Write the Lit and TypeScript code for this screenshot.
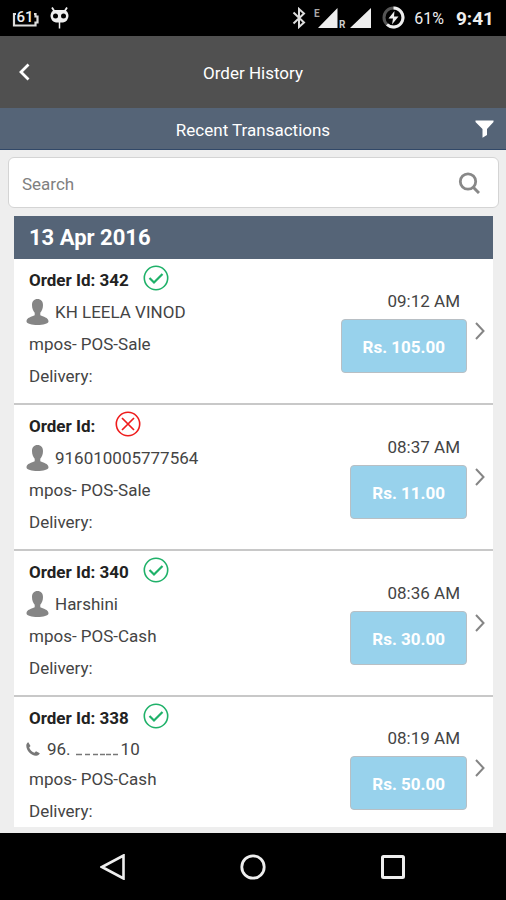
import { LitElement, html, css, svg, nothing } from "lit";
import { customElement, property } from "lit/decorators.js";

interface Order {
  id: string;
  ok: boolean;
  contact: "person" | "phone";
  name: string;
  nameEnd?: string;
  mode: string;
  time: string;
  amount: string;
}

const ORDERS: Order[] = [
  { id: "342", ok: true, contact: "person", name: "KH LEELA VINOD", mode: "POS-Sale", time: "09:12 AM", amount: "105.00" },
  { id: "", ok: false, contact: "person", name: "916010005777564", mode: "POS-Sale", time: "08:37 AM", amount: "11.00" },
  { id: "340", ok: true, contact: "person", name: "Harshini", mode: "POS-Cash", time: "08:36 AM", amount: "30.00" },
  { id: "338", ok: true, contact: "phone", name: "96.", nameEnd: "10", mode: "POS-Cash", time: "08:19 AM", amount: "50.00" },
];

@customElement("status-bar")
export class StatusBar extends LitElement {
  static styles = css`
    :host { display: flex; align-items: center; height: 36px; box-sizing: border-box; padding: 0 12px; background: #000; color: #eee; }
    svg { display: block; flex: none; }
    .left { display: flex; align-items: center; gap: 10px; flex: 1; }
    .right { display: flex; align-items: center; }
    .signals { margin: 0 11px 0 8px; }
    .pct { font-size: 16px; margin: 0 12px 0 9px; padding-top: 2px; }
    .clock { font-size: 19px; font-weight: 700; padding-top: 2px; }
    .tiny { font: 700 10px Roboto, sans-serif; }
    .num { font: 500 15px Roboto, sans-serif; }
  `;
  render() {
    return html`
      <div class="left">
        <svg width="28" height="22" viewBox="0 0 28 22" aria-label="Battery 61">
          <path d="M4 7H2V18.500H23.500V15.500H25.500V9.500H23.500V7H22" fill="none" stroke="#ddd" stroke-width="2.200" />
          <text class="num" x="4.500" y="14.500" fill="#eee">61</text>
        </svg>
        <svg width="19" height="22" viewBox="0 0 19 22" aria-label="System notification">
          <path d="M2 .5L4.500 4.500M17 .5L14.500 4.500" stroke="#eee" stroke-width="1.800" />
          <path d="M4 3H15Q18.500 5 18.500 9Q18 14.500 13 15.500H6Q1 14.500 .5 9Q.5 5 4 3Z" fill="#eee" />
          <circle cx="5.500" cy="9" r="2.500" fill="#000" /><circle cx="13.500" cy="9" r="2.500" fill="#000" />
          <path d="M9.500 15V21.500" stroke="#eee" stroke-width="1.500" />
        </svg>
      </div>
      <div class="right">
        <svg width="14" height="22" viewBox="0 0 14 22" aria-label="Bluetooth">
          <path d="M1.500 5.500L12 15.500L7 20V2L12 6.500L1.500 16.500" fill="none" stroke="#ddd" stroke-width="2" />
        </svg>
        <svg class="signals" width="57" height="24" viewBox="0 0 57 24" aria-label="Mobile signal">
          <path d="M23.500 2V22H4Z M57 2V22H36Z" fill="#eee" />
          <text class="tiny" x="0" y="11" fill="#aaa">E</text>
          <text class="tiny" x="25" y="22" fill="#ccc">R</text>
        </svg>
        <svg width="23" height="24" viewBox="0 0 23 24" aria-label="Charging">
          <circle cx="11.500" cy="11.500" r="9.500" fill="none" stroke="#555" stroke-width="3" />
          <path d="M11.500 2A9.500 9.500 0 1 1 5 18.500" fill="none" stroke="#eee" stroke-width="3" />
          <path d="M12.500 5L6.500 12.500H11L10 18.500L16.500 10.500H12Z" fill="#eee" />
        </svg>
        <span class="pct">61%</span>
        <span class="clock">9:41</span>
      </div>`;
  }
}

@customElement("order-row")
export class OrderRow extends LitElement {
  @property({ attribute: false }) order!: Order;
  static styles = css`
    :host { display: flex; align-items: center; justify-content: space-between; padding: 5px 8px 11px 12px; }
    svg { display: block; flex: none; }
    .line { display: flex; align-items: center; height: 32px; padding-left: 3px; }
    .id { font-weight: 700; color: #222; gap: 14px; }
    .id.blank { gap: 20px; }
    .id svg { margin-bottom: 4px; }
    .who { padding: 0; gap: 6px; }
    .who.phone { gap: 7px; height: 29px; }
    .who span { display: flex; align-items: center; }
    .side { display: flex; align-items: center; gap: 8px; padding-top: 6px; }
    .pay { display: flex; flex-direction: column; align-items: flex-end; gap: 6px; }
    .time { line-height: 24px; padding-right: 7px; }
    button { font: 700 17px/24px Roboto, sans-serif; color: #fff; background: #98d2ec; border: 1px solid #b8bfc4; border-radius: 4px; padding: 15px 21px 13px; margin: 0; }
  `;
  render() {
    const o = this.order;
    return html`
      <div>
        <div class="line id ${o.id ? "" : "blank"}">
          <span>Order Id: ${o.id}</span>
          <svg width="26" height="26" viewBox="0 0 26 26" fill="none" stroke=${o.ok ? "#1fb169" : "#ee1c1c"}>
            <circle cx="13" cy="13" r="11.700" stroke-width="1.600" />
            ${o.ok
              ? svg`<path d="M6.500 13L11 17.500L19.500 9" stroke-width="2.200" />`
              : svg`<path d="M7 7L19 19M19 7L7 19" stroke-width="1.700" />`}
          </svg>
        </div>
        <div class="line who ${o.contact}">
          ${o.contact === "person"
            ? html`<svg width="23" height="26" viewBox="0 0 23 26" fill="#858585">
                <path d="M11.500 0C15 0 17 2.500 17 6C17 9.500 15.800 12 14.300 13.700V16.200C17 18 22.500 18 22.500 22.500C22.500 24.500 17 26 11.500 26S.5 24.500 .5 22.500C.5 18 6 18 8.700 16.200V13.700C7.200 12 6 9.500 6 6C6 2.500 8 0 11.500 0Z" />
              </svg>`
            : html`<svg width="14" height="14" viewBox="0 0 14 14" fill="#777">
                <path d="M2.300 .3L4.500 4L3.200 5.500C4 8 6 10 8.500 10.700L10 9.300L13.800 11.300C13.200 13 11.800 13.900 10 13.800C5 13.500 .3 8.500 .3 3.800C.3 2.200 1 .9 2.300 .3Z" />
              </svg>`}
          <span>${o.name}${o.nameEnd
            ? html`<svg width="50" height="14" viewBox="0 0 50 14" stroke="#777" stroke-width="1.500">
                <path d="M5 12.500H11M14 12.500H19M22 12.500H27M29 12.500H34M35 12.500H40M42 12.500H47" />
              </svg>${o.nameEnd}`
            : nothing}</span>
        </div>
        <div class="line">mpos- ${o.mode}</div>
        <div class="line">Delivery:</div>
      </div>
      <div class="side">
        <div class="pay">
          <span class="time">${o.time}</span>
          <button type="button">Rs. ${o.amount}</button>
        </div>
        <a href="#order" aria-label="Order details">
          <svg width="10" height="18" viewBox="0 0 10 18" fill="none" stroke="#858585" stroke-width="2"><path d="M1 1L8.500 9L1 17" /></svg>
        </a>
      </div>`;
  }
}

@customElement("app-root")
export class AppRoot extends LitElement {
  static styles = css`
    :host { display: flex; flex-direction: column; min-height: 100vh; background: #eee; font: 17px/24px Roboto, sans-serif; color: #444; }
    svg { display: block; }
    button { background: none; border: 0; padding: 0; margin: 0; }
    .bar { display: grid; grid-template-columns: 1fr auto 1fr; align-items: center; box-sizing: border-box; color: #fff; }
    .bar h1, .bar h2 { margin: 0; padding-top: 2px; font-size: 17px; font-weight: 400; grid-column: 2; }
    .top { height: 72px; background: #505050; padding: 0 18px; }
    .sub { height: 42px; background: #556477; border-bottom: 1px solid #314868; padding: 0 12px; }
    .sub button { justify-self: end; }
    .search { display: flex; align-items: center; margin: 7px 7px 8px 8px; height: 51px; box-sizing: border-box; background: #fff; border: 1px solid #d4d4d4; border-radius: 6px; padding: 0 18px 0 13px; }
    input { flex: 1; min-width: 0; border: 0; outline: 0; padding: 2px 0 0; background: none; font: 17px/24px Roboto, sans-serif; color: #444; }
    input::placeholder { color: #808080; opacity: 1; }
    main { flex: 1; }
    .list { margin: 0 13px 6px 14px; background: #fff; }
    .date { margin: 0; padding: 10px 15px 9px; background: #556477; color: #fff; font-size: 22px; line-height: 24px; font-weight: 700; }
    order-row + order-row { border-top: 2px solid #c8c8c8; }
    order-row:last-child { padding-bottom: 0; }
    nav { display: flex; align-items: center; justify-content: center; gap: 114px; height: 67px; background: #000; }
  `;
  render() {
    return html`
      <status-bar></status-bar>
      <header class="bar top">
        <button type="button" aria-label="Back">
          <svg width="12" height="18" viewBox="0 0 12 18" fill="none" stroke="#fff" stroke-width="2.800"><path d="M10.500 1.500L3 9L10.500 16.500" /></svg>
        </button>
        <h1>Order History</h1>
      </header>
      <div class="bar sub">
        <h2>Recent Transactions</h2>
        <button type="button" aria-label="Filter">
          <svg width="19" height="18" viewBox="0 0 19 18" fill="#fff"><path d="M.5 .5H18.500V2L12 9V15L7.500 17.800V9L.5 2Z" /></svg>
        </button>
      </div>
      <main>
        <label class="search">
          <input type="text" placeholder="Search" aria-label="Search" />
          <svg width="22" height="22" viewBox="0 0 22 22" fill="none" stroke="#888" stroke-width="2.800"><circle cx="10" cy="9.500" r="7.700" /><path d="M15 15L21 21" stroke-width="3" /></svg>
        </label>
        <section class="list">
          <h3 class="date">13 Apr 2016</h3>
          ${ORDERS.map((o) => html`<order-row .order=${o}></order-row>`)}
        </section>
      </main>
      <nav>
        <button type="button" aria-label="Back">
          <svg width="26" height="26" viewBox="0 0 26 26" fill="none" stroke="#eee" stroke-width="2.600"><path d="M23.500 1.500V24.500L2 13Z" /></svg>
        </button>
        <button type="button" aria-label="Home">
          <svg width="26" height="26" viewBox="0 0 26 26" fill="none" stroke="#eee" stroke-width="2.800"><circle cx="13" cy="13" r="11.200" /></svg>
        </button>
        <button type="button" aria-label="Recent apps">
          <svg width="26" height="26" viewBox="0 0 26 26" fill="none" stroke="#eee" stroke-width="3"><rect x="2.500" y="2.500" width="21" height="21" rx="1" /></svg>
        </button>
      </nav>`;
  }
}
